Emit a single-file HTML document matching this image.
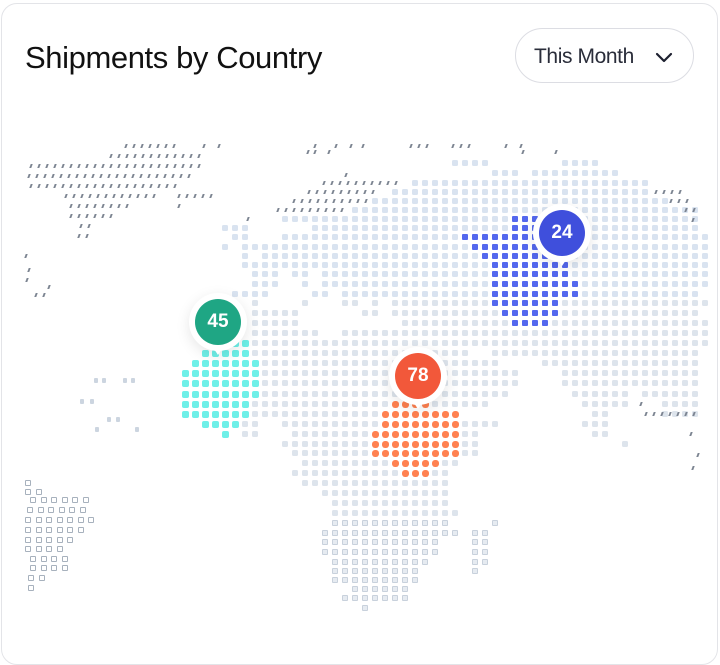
<!DOCTYPE html>
<html><head><meta charset="utf-8"><style>
html,body{margin:0;padding:0;background:#fff;}
body{width:720px;height:634px;overflow:hidden;position:relative;font-family:"Liberation Sans",sans-serif;}
.card{position:absolute;left:1px;top:3px;width:715px;height:660px;border:1px solid #e3e4e8;border-radius:16px;background:#fff;}
h1{position:absolute;left:25px;top:39px;margin:0;font-size:31px;font-weight:500;letter-spacing:-0.4px;color:#111;line-height:38px;}
.pill{position:absolute;left:515px;top:28px;width:179px;height:55px;border:1px solid #dcdde3;border-radius:28px;box-sizing:border-box;}
.pill span{position:absolute;left:18px;top:16px;font-size:21px;color:#2a2d3a;letter-spacing:-0.4px;}
.pill svg{position:absolute;left:139px;top:23px;}
#map{position:absolute;left:0;top:0;width:720px;height:634px;}
.d{position:absolute;}
.mk{position:absolute;width:58px;height:58px;border-radius:50%;background:#fff;box-shadow:0 4px 14px rgba(0,0,0,0.10);}
.mk:after{content:"";position:absolute;left:17px;top:44px;border-left:12px solid transparent;border-right:12px solid transparent;border-top:18px solid #fff;}
.mk b{position:absolute;left:6px;top:6px;width:46px;height:46px;border-radius:50%;color:#fff;font-size:19px;font-weight:600;text-align:center;line-height:46px;z-index:2;}
</style></head><body>
<div class="card"></div>
<h1>Shipments by Country</h1>
<div class="pill"><span>This Month</span><svg width="18" height="12" viewBox="0 0 18 12"><path d="M2 2 L9 9 L16 2" fill="none" stroke="#1e2130" stroke-width="2.2" stroke-linecap="round" stroke-linejoin="round"/></svg></div>
<div id="map"></div>
<div class="mk" style="left:189px;top:293px"><b style="background:#1fa684">45</b></div>
<div class="mk" style="left:533px;top:204px"><b style="background:#3f4fdc">24</b></div>
<div class="mk" style="left:389px;top:347px"><b style="background:#f2583a">78</b></div>
<script>
var map=document.getElementById('map');var cells={};
function snap(x){return Math.round((x-5)/10)*10+5;}
function fill(y,ranges,k){ranges.forEach(function(r){var a=snap(r[0]),b=snap(r[1]===undefined?r[0]:r[1]);for(var x=a;x<=b;x+=10){cells[y+'_'+x]={x:x,y:y,k:k};}});}
var L=[
[163,[[452,485],[560,590]]],[173,[[493,510],[535,615]]],
[183,[[410,645]]],[192,[[390,645]]],[201,[[370,665]]],[210,[[350,690]]],
[219,[[285,695]]],[228,[[228,240],[310,695]]],[237,[[238,245],[285,700]]],
[247,[[228],[243,700]]],[256,[[243],[268,700]]],[265,[[243,700]]],
[274,[[250,262],[277],[295,305],[320],[337,700]]],[284,[[250,262],[277],[300],[322],[338,700]]],
[294,[[235,262],[312,320],[345,695]]],[303,[[250],[305],[340],[358],[375],[395,700]]],
[313,[[257,297],[360],[375],[392,695]]],[323,[[257,297],[402,700]]],
[333,[[257,313],[340,370],[387,700]]],[343,[[245,700]]],[353,[[248,465],[490,690]]],
[363,[[258,495],[540,690]]],[373,[[265,510],[560,695]]],[383,[[260,510],[565,695]]],
[394,[[260,505],[575,620],[640,695]]],[404,[[248,485],[580,620],[660,695]]],
[414,[[245,455],[590,605],[665,695]]],[424,[[243,255],[288,490],[585,605]]],
[434,[[243,255],[290,470],[595,605]]],[444,[[287,473],[620]]],
[453,[[297,475]]],[463,[[307,455]]],[473,[[297,447]]],[483,[[307,440]]],[493,[[320,440]]],
[503,[[330,440]]],[513,[[330,450]]],[523,[[330,440],[495]]],[533,[[320,450],[475,487]]],
[542,[[320,433],[475,487]]],[552,[[320,433],[475,488]]],[562,[[330,420],[477,488]]],
[571,[[330,413],[478]]],[580,[[330,413]]],[589,[[353,400]]],[598,[[343,405]]],[608,[[367]]]];
L.forEach(function(r){fill(r[0],r[1],r[0]>=523?'H':'L');});
var B=[[219,[[510,530]]],[228,[[515,540]]],[237,[[468,540]]],[247,[[470,545]]],[256,[[480,555]]],[265,[[490,560]]],[274,[[497,565]]],[284,[[495,570]]],[294,[[495,575]]],[303,[[492,557]]],[313,[[505,550]]],[323,[[515,540]]]];
B.forEach(function(r){fill(r[0],r[1],'B');});
var T=[[343,[[235,240]]],[353,[[200,240]]],[363,[[190,250]]],[373,[[187,258]]],[383,[[186,258]]],[394,[[186,255]]],[404,[[184,240]]],[414,[[185,240]]],[424,[[205,230]]],[434,[[225]]]];
T.forEach(function(r){fill(r[0],r[1],'T');});
var O=[[404,[[397,428]]],[414,[[387,452]]],[424,[[387,452]]],[434,[[378,452]]],[444,[[378,452]]],[453,[[378,452]]],[463,[[390,433]]],[473,[[403,425]]]];
O.forEach(function(r){fill(r[0],r[1],'O');});
var html='';
for(var key in cells){var c=cells[key];var s;
if(c.k=='L'){s='left:'+(c.x-3)+'px;top:'+(c.y-3)+'px;width:6px;height:6px;border-radius:1.5px;background:'+(c.y<300?'#d9e3f0':'#dde4ec');}
else if(c.k=='H'){s='left:'+(c.x-3)+'px;top:'+(c.y-3)+'px;width:4px;height:4px;border:1px solid #c8d1dc;border-radius:1px;background:#e6ebf1';}
else if(c.k=='B'){s='left:'+(c.x-3)+'px;top:'+(c.y-3)+'px;width:6px;height:6px;border-radius:1px;background:#5468ee';}
else if(c.k=='T'){s='left:'+(c.x-3)+'px;top:'+(c.y-3)+'px;width:7px;height:7px;border-radius:2px;background:#6ef0e8';}
else{s='left:'+(c.x-3)+'px;top:'+(c.y-3)+'px;width:7px;height:7px;border-radius:3px;background:#ff8150';}
html+='<div class="d" style="'+s+'"></div>';}
function dash(y,a,b,st){st=st||8;if(b===undefined)b=a;for(var x=a;x<=b;x+=st){html+='<div class="d" style="left:'+x+'px;top:'+(y-2)+'px;width:1.5px;height:4px;background:#7d8592;transform:skewX(-20deg)"></div>';}}
[[146,125,175],[146,203],[146,218],[156,110,200],[166,30,200],[176,28,190],[186,30,175],[196,65,160],[196,178,210],[206,70,128],[206,178,185],[216,70,110],[226,80,92],[236,78,88],[256,25],[270,28],[280,26],[287,48],[295,35,45],
[146,314],[146,335],[146,350],[146,362],[146,410,432],[146,452,475],[146,505],[146,520],[152,307],[152,314],[152,328],[152,522],[152,555],[175,345],
[183,323,400],[192,308,372],[201,293,365],[210,277,345],[219,247],[192,655,680],[201,670,690],[210,685,695],[220,692],[404,640],[414,645,695],[434,690],[455,697],[468,692]
].forEach(function(d){dash(d[0],d[1],d[2]);});
[[378,94],[378,102],[378,123],[378,131],[399,80],[399,90],[417,107],[417,116],[427,95],[427,135]].forEach(function(p){html+='<div class="d" style="left:'+p[1]+'px;top:'+p[0]+'px;width:4px;height:5px;border-radius:1px;background:#ccd5e0"></div>';});
function sa(y,a,b){if(b===undefined)b=a;for(var x=a;x<=b;x+=10.5){html+='<div class="d" style="left:'+Math.round(x)+'px;top:'+(y-2)+'px;width:4px;height:4px;border:1px solid #a7b1bd;border-radius:1px"></div>';}}
[[482,25,35],[491,25,43],[499,30,85],[509,27,83],[519,25,92],[529,25,80],[539,25,68],[548,25,66],[558,30,66],[567,30,65],[577,28,42],[587,28]].forEach(function(r){sa(r[0],r[1],r[2]);});
map.innerHTML=html;
</script>
</body></html>
